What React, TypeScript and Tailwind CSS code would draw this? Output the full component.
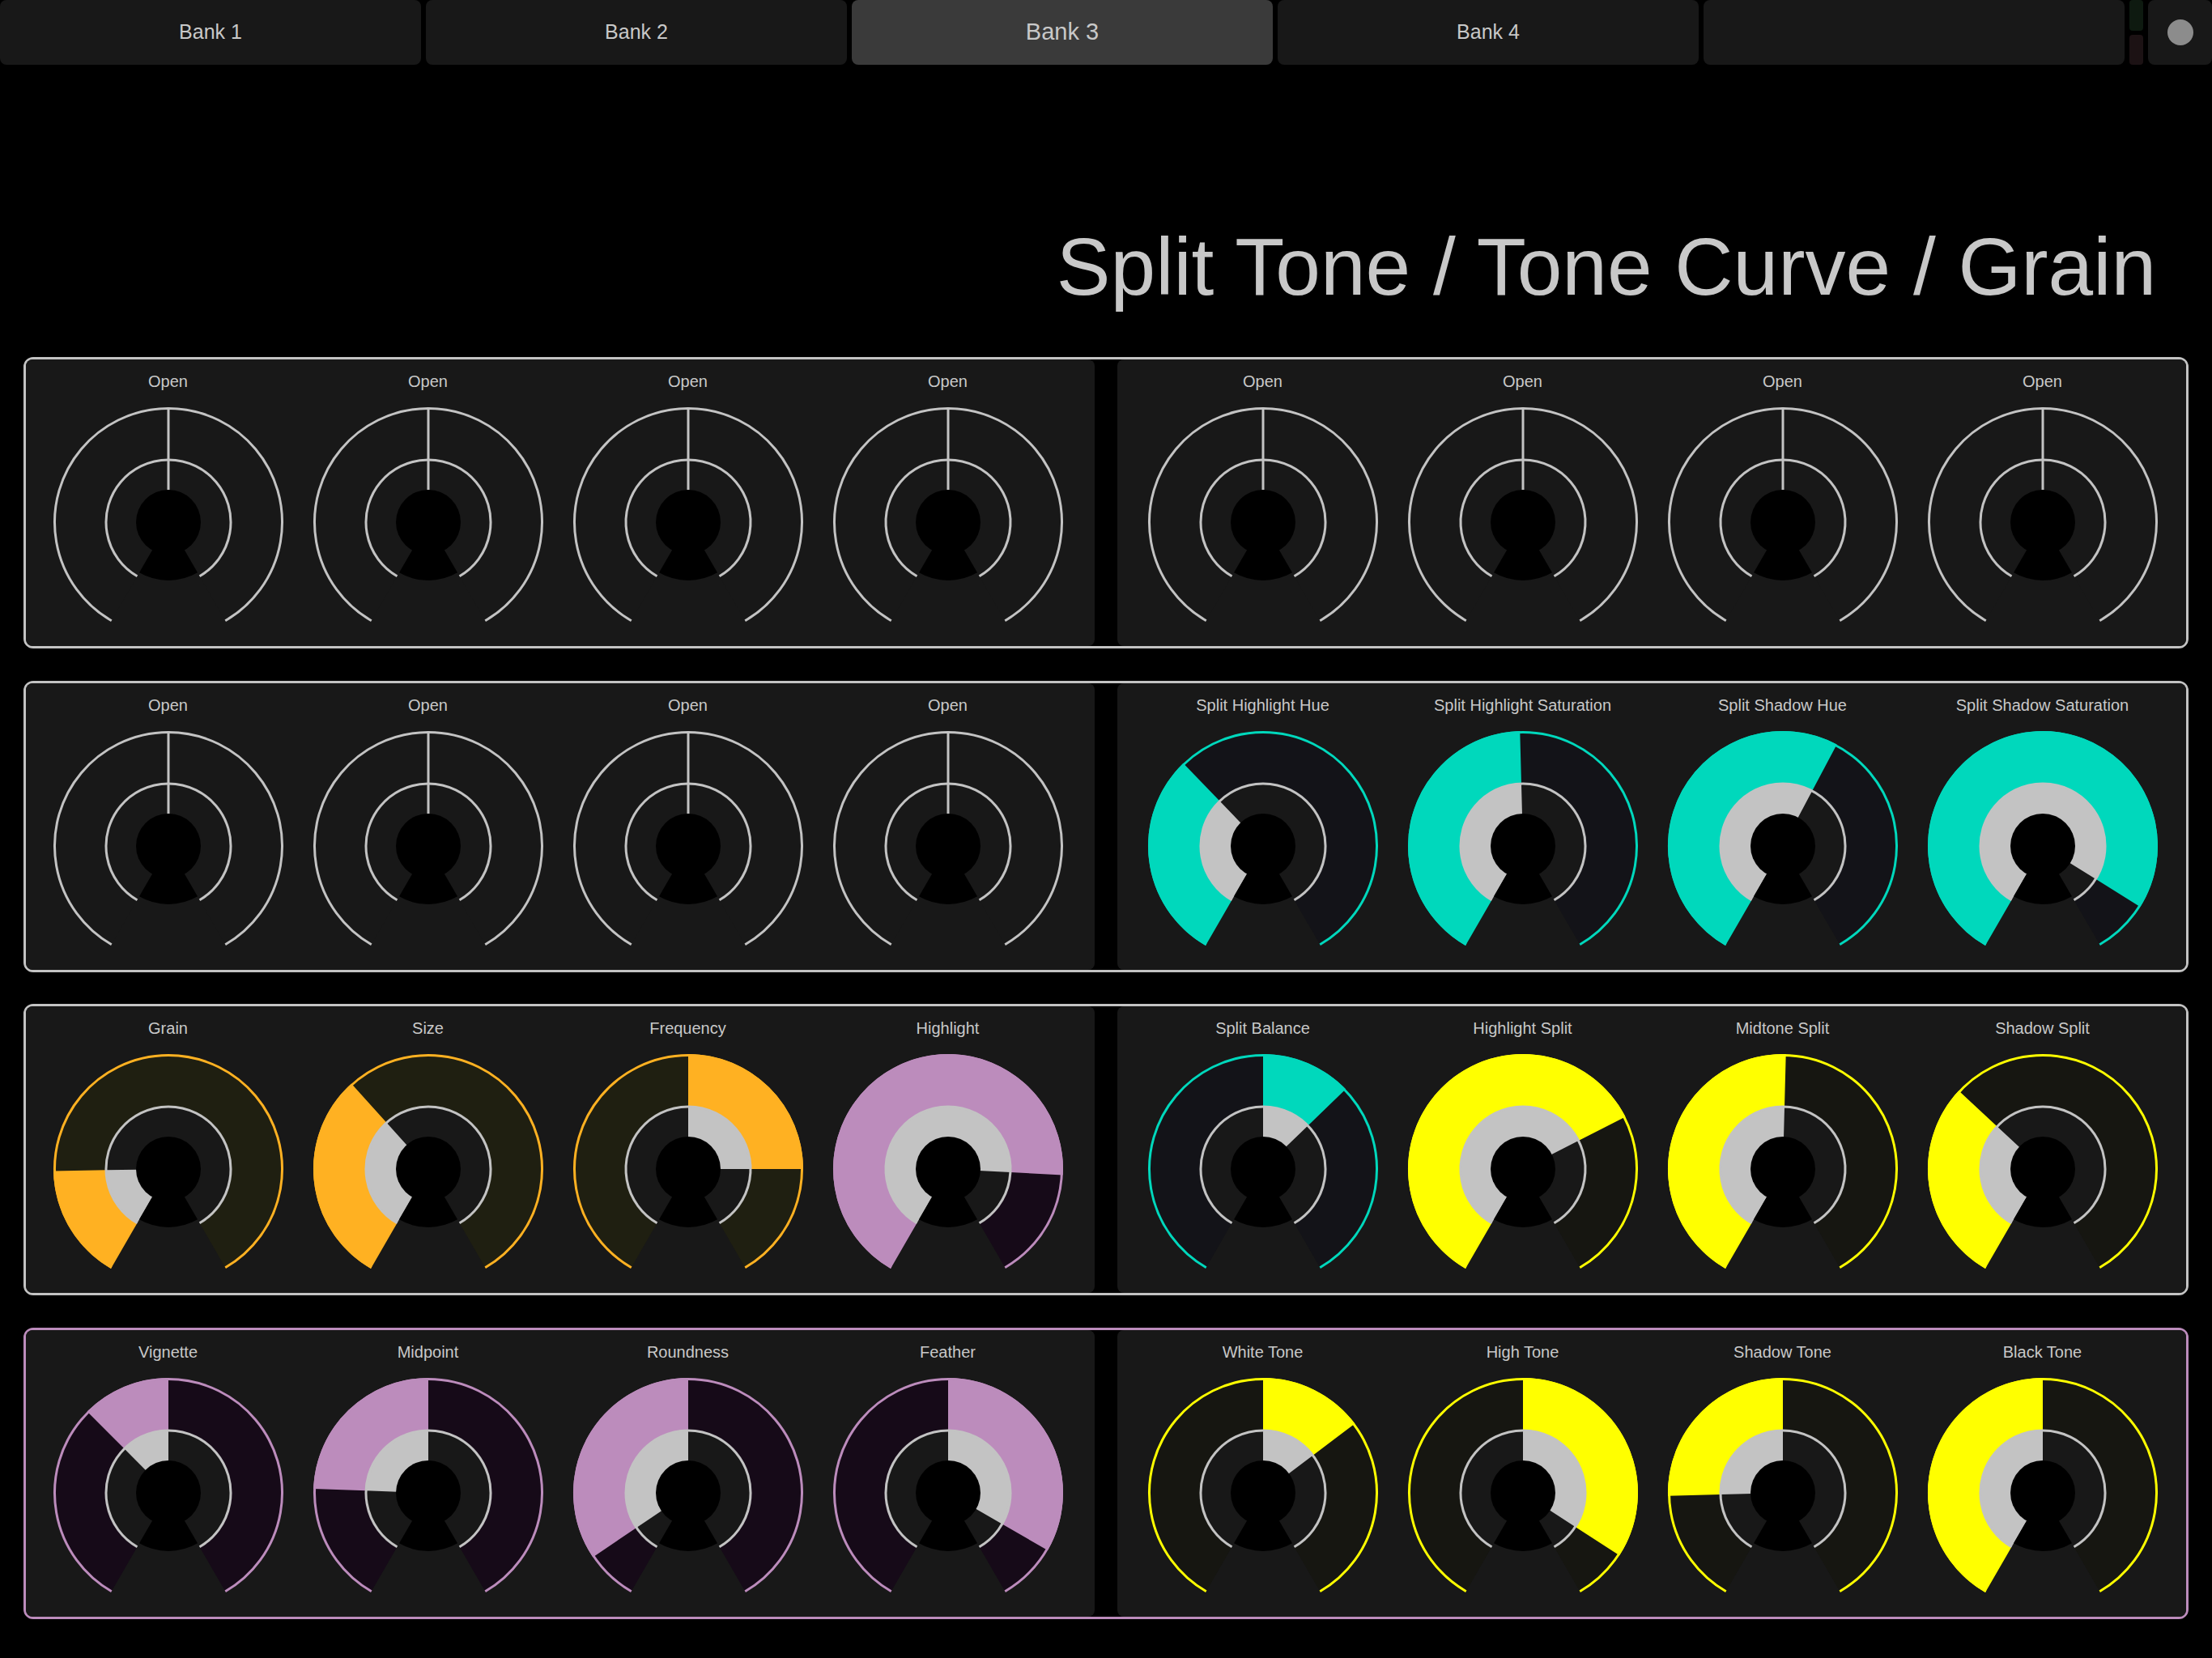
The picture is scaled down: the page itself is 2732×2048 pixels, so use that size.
import type React from "react";

type Tone = "gray" | "teal" | "orange" | "purple" | "yellow";

type KnobDef = { label: string; tone: Tone; from: number; to: number };

const TONES: Record<Tone, { accent: string; dark: string }> = {
  gray: { accent: "#c3c3c3", dark: "#181818" },
  teal: { accent: "#00d8bc", dark: "#131318" },
  orange: { accent: "#ffb122", dark: "#1f1f11" },
  purple: { accent: "#bc8cbc", dark: "#160a18" },
  yellow: { accent: "#ffff00", dark: "#161611" },
};

const SIZE = 290;
const CX = SIZE / 2;
const CY = SIZE / 2;
const R_OUT = 142;
const R_IN = 77;
const R_HUB = 40;
const R_NOTCH = 72;

const pt = (r: number, a: number) => {
  const t = (a * Math.PI) / 180;
  return `${(CX + r * Math.sin(t)).toFixed(2)} ${(CY - r * Math.cos(t)).toFixed(2)}`;
};

// annular sector, angles clockwise from 12 o'clock
const ring = (r0: number, r1: number, a0: number, a1: number) => {
  const large = a1 - a0 > 180 ? 1 : 0;
  if (r0 <= 0) {
    return `M ${CX} ${CY} L ${pt(r1, a0)} A ${r1} ${r1} 0 ${large} 1 ${pt(r1, a1)} Z`;
  }
  return `M ${pt(r1, a0)} A ${r1} ${r1} 0 ${large} 1 ${pt(r1, a1)} L ${pt(r0, a1)} A ${r0} ${r0} 0 ${large} 0 ${pt(r0, a0)} Z`;
};

const arc = (r: number, a0: number, a1: number) => {
  const large = a1 - a0 > 180 ? 1 : 0;
  return `M ${pt(r, a0)} A ${r} ${r} 0 ${large} 1 ${pt(r, a1)}`;
};

const open = (): KnobDef => ({ label: "Open", tone: "gray", from: 0, to: 0 });

const rows: { border: "gray" | "purple"; left: KnobDef[]; right: KnobDef[] }[] = [
  {
    border: "gray",
    left: [open(), open(), open(), open()],
    right: [open(), open(), open(), open()],
  },
  {
    border: "gray",
    left: [open(), open(), open(), open()],
    right: [
      { label: "Split Highlight Hue", tone: "teal", from: -150, to: -44 },
      { label: "Split Highlight Saturation", tone: "teal", from: -150, to: -1.5 },
      { label: "Split Shadow Hue", tone: "teal", from: -150, to: 28 },
      { label: "Split Shadow Saturation", tone: "teal", from: -150, to: 122 },
    ],
  },
  {
    border: "gray",
    left: [
      { label: "Grain", tone: "orange", from: -150, to: -91 },
      { label: "Size", tone: "orange", from: -150, to: -42 },
      { label: "Frequency", tone: "orange", from: 0, to: 90 },
      { label: "Highlight", tone: "purple", from: -150, to: 93 },
    ],
    right: [
      { label: "Split Balance", tone: "teal", from: 0, to: 46 },
      { label: "Highlight Split", tone: "yellow", from: -150, to: 63 },
      { label: "Midtone Split", tone: "yellow", from: -150, to: 1.5 },
      { label: "Shadow Split", tone: "yellow", from: -150, to: -47 },
    ],
  },
  {
    border: "purple",
    left: [
      { label: "Vignette", tone: "purple", from: -45, to: 0 },
      { label: "Midpoint", tone: "purple", from: -88, to: 0 },
      { label: "Roundness", tone: "purple", from: -124, to: 0 },
      { label: "Feather", tone: "purple", from: 0, to: 120 },
    ],
    right: [
      { label: "White Tone", tone: "yellow", from: 0, to: 53 },
      { label: "High Tone", tone: "yellow", from: 0, to: 123 },
      { label: "Shadow Tone", tone: "yellow", from: -91.5, to: 0 },
      { label: "Black Tone", tone: "yellow", from: -150, to: 0 },
    ],
  },
];

const Knob: React.FC<{ knob: KnobDef }> = ({ knob }) => {
  const { accent, dark } = TONES[knob.tone];
  const filled = knob.to > knob.from;
  return (
    <div className="flex flex-col items-center">
      <div className="h-[24px] whitespace-nowrap text-[20px] leading-[24px] text-[#c8c8c8]">{knob.label}</div>
      <svg className="mt-[17px]" width={SIZE} height={SIZE} viewBox={`0 0 ${SIZE} ${SIZE}`}>
        <path d={ring(R_IN, R_OUT, -150, 150)} fill={dark} />
        {filled && <path d={ring(R_IN, R_OUT, knob.from, knob.to)} fill={accent} />}
        {filled && <path d={ring(R_HUB - 2, R_IN, knob.from, knob.to)} fill="#c3c3c3" />}
        <path d={arc(R_OUT - 1.5, -150, 150)} fill="none" stroke={accent} strokeWidth={3} />
        <path d={arc(R_IN, -150, 150)} fill="none" stroke="#c3c3c3" strokeWidth={3} />
        {!filled && <line x1={CX} y1={CY - R_HUB} x2={CX} y2={CY - R_OUT} stroke={accent} strokeWidth={3} />}
        <circle cx={CX} cy={CY} r={R_HUB} fill="#000" />
        <path d={ring(0, R_NOTCH, 150, 210)} fill="#000" />
      </svg>
    </div>
  );
};

const Panel: React.FC<{ knobs: KnobDef[]; side: "left" | "right" }> = ({ knobs, side }) => (
  <div
    className={
      side === "left"
        ? "grid flex-1 grid-cols-4 rounded-[8px] bg-[#181818] pl-[15px] pr-[21px] pt-[15px]"
        : "grid flex-1 grid-cols-4 rounded-[8px] bg-[#181818] pl-[19px] pr-[17px] pt-[15px]"
    }
  >
    {knobs.map((k, i) => (
      <Knob key={`${k.label}-${i}`} knob={k} />
    ))}
  </div>
);

const App: React.FC = () => {
  const banks = ["Bank 1", "Bank 2", "Bank 3", "Bank 4", ""];

  return (
    <div className="h-[2048px] w-[2732px] overflow-hidden bg-black font-['Liberation_Sans',Arial,sans-serif]">
      {/* Bank tabs */}
      <div className="flex h-[80px] gap-[6px]">
        {banks.map((b, i) =>
          i === 2 ? (
            <div key={i} className="flex flex-1 items-center justify-center rounded-[8px] bg-[#3a3a3a] text-[29px] text-[#c8c8c8]">
              {b}
            </div>
          ) : (
            <div key={i} className="flex flex-1 items-center justify-center rounded-[8px] bg-[#181818] text-[25px] text-[#c8c8c8]">
              {b}
            </div>
          )
        )}
        <div className="flex w-[17px] flex-col gap-[5px]">
          <div className="flex-1 rounded-[4px] bg-[#0e1a10]" />
          <div className="flex-1 rounded-[4px] bg-[#1c1214]" />
        </div>
        <div className="flex w-[79px] items-center justify-center rounded-[8px] bg-[#181818]">
          <div className="h-[32px] w-[32px] rounded-full bg-[#8c8c8c]" />
        </div>
      </div>

      {/* Title */}
      <div className="mt-[199px] pr-[69px] text-right text-[100px] leading-none text-[#c8c8c8]">
        Split Tone / Tone Curve / Grain
      </div>

      {/* Rows */}
      <div className="mt-[62px] flex flex-col gap-[39.7px] px-[29px]">
        {rows.map((row, i) => (
          <div
            key={i}
            className={
              row.border === "purple"
                ? "flex h-[360px] gap-[28px] rounded-[12px] border-[3px] border-[#bc8cbc] bg-black"
                : "flex h-[360px] gap-[28px] rounded-[12px] border-[3px] border-[#c3c3c3] bg-black"
            }
          >
            <Panel knobs={row.left} side="left" />
            <Panel knobs={row.right} side="right" />
          </div>
        ))}
      </div>
    </div>
  );
};

export default App;
